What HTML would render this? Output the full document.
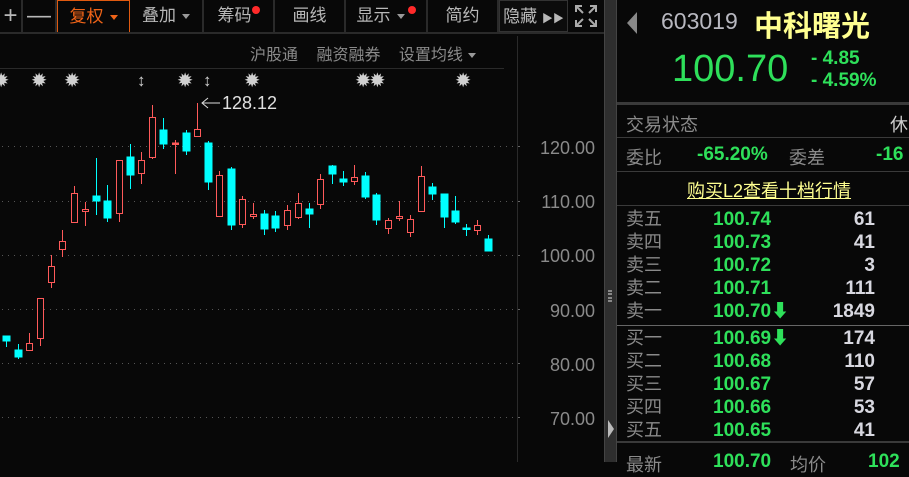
<!DOCTYPE html>
<html><head><meta charset="utf-8"><style>
*{margin:0;padding:0;box-sizing:border-box}
body{width:909px;height:462px;background:#080808;overflow:hidden;position:relative;font-family:"Liberation Sans","Noto Sans CJK SC",sans-serif}
.a{position:absolute;white-space:nowrap}
.tb{position:absolute;top:0;height:32px;border-right:2px solid #2a2a2a;color:#b8b8b8;font-size:17px;line-height:32px;text-align:center}
.dot{display:inline-block;width:8px;height:8px;border-radius:50%;background:#ff2a2a;vertical-align:top;margin-top:6px}
.tri{display:inline-block;border-left:4px solid transparent;border-right:4px solid transparent;border-top:5px solid #999;vertical-align:middle;margin-left:6px}
.lab{color:#8a8a8a;font-size:18px}
.g{color:#2ee05a;font-weight:bold;font-size:19px}
.w{color:#d8d8e0;font-weight:bold;font-size:19px}
.hl{position:absolute;left:617px;right:0;height:2px;background:#333}
</style></head><body>
<div class="tb" style="left:0;width:23px;font-size:24px">+</div>
<div class="tb" style="left:23px;width:34px;font-size:24px">—</div>
<div class="tb" style="left:57px;width:73px;border:1px solid #e05a10;color:#f06418;height:33px">复权<span class="tri" style="border-top-color:#f06418"></span></div>
<div class="tb" style="left:130px;width:74px">叠加<span class="tri"></span></div>
<div class="tb" style="left:204px;width:71px">筹码<span class="dot"></span></div>
<div class="tb" style="left:275px;width:71px">画线</div>
<div class="tb" style="left:346px;width:82px">显示<span class="tri"></span><span class="dot" style="margin-left:3px"></span></div>
<div class="tb" style="left:428px;width:71px">简约</div>
<div class="tb" style="left:499px;width:69px;border:1px solid #333;background:#0c0c0c">隐藏 <span style="font-size:11px">▶▶</span></div>
<div class="tb" style="left:568px;width:36px;border-right:none">
<svg width="22" height="22" viewBox="0 0 22 22" style="margin-top:5px" stroke="#aaa" stroke-width="2" fill="none"><path d="M1 7V1H7M15 1H21V7M21 15V21H15M7 21H1V15M2 2L8 8M20 2L14 8M20 20L14 14M2 20L8 14"/></svg></div>
<div class="a" style="left:0;top:32px;width:604px;height:2px;background:#2a2a2a"></div>
<div class="a" style="left:250px;top:41px;color:#8a8a8a;font-size:16px;word-spacing:14px">沪股通 融资融券 设置均线<span class="tri" style="margin-left:5px"></span></div>
<div class="a" style="left:0;top:68px;width:504px;height:1px;background:#2a2a2a"></div>
<div class="a" style="left:517px;top:36px;width:1px;height:426px;background:#2a2a2a"></div>
<div class="a" style="top:71px;left:0;color:#d0d0d0;font-size:17px;font-weight:bold">
<span class="a" style="left:-6px">✹</span><span class="a" style="left:32px">✹</span><span class="a" style="left:65px">✹</span><span class="a" style="left:137px">↕</span><span class="a" style="left:178px">✹</span><span class="a" style="left:203px">↕</span><span class="a" style="left:245px">✹</span><span class="a" style="left:356px">✹✹</span><span class="a" style="left:456px">✹</span></div>
<svg class="a" style="left:0;top:0" width="520" height="462">
<g stroke="#555" stroke-dasharray="1 5" stroke-width="1">
<line x1="2" y1="146.5" x2="515" y2="146.5"/><line x1="2" y1="201.5" x2="515" y2="201.5"/><line x1="2" y1="255.5" x2="515" y2="255.5"/><line x1="2" y1="309.5" x2="515" y2="309.5"/><line x1="2" y1="363.5" x2="515" y2="363.5"/><line x1="2" y1="417.5" x2="515" y2="417.5"/></g>
<g stroke="#666"><line x1="518" y1="146.5" x2="523" y2="146.5"/><line x1="518" y1="201.5" x2="523" y2="201.5"/><line x1="518" y1="255.5" x2="523" y2="255.5"/><line x1="518" y1="309.5" x2="523" y2="309.5"/><line x1="518" y1="363.5" x2="523" y2="363.5"/><line x1="518" y1="417.5" x2="523" y2="417.5"/></g>
<g stroke="#00ffff" fill="#00ffff">
<line x1="6.5" y1="336" x2="6.5" y2="347"/><rect x="3" y="336" width="7" height="5"/>
<line x1="18.5" y1="344" x2="18.5" y2="359"/><rect x="15" y="350" width="7" height="7"/>
<line x1="96.5" y1="158" x2="96.5" y2="215"/><rect x="93" y="196" width="7" height="5"/>
<line x1="107.5" y1="185" x2="107.5" y2="222"/><rect x="104" y="201" width="7" height="17"/>
<line x1="130.5" y1="144" x2="130.5" y2="189"/><rect x="127" y="157" width="7" height="18"/>
<line x1="163.5" y1="118" x2="163.5" y2="149"/><rect x="160" y="130" width="7" height="14"/>
<line x1="186.5" y1="130" x2="186.5" y2="155"/><rect x="183" y="133" width="7" height="18"/>
<line x1="208.5" y1="141" x2="208.5" y2="190"/><rect x="205" y="143" width="7" height="39"/>
<line x1="231.5" y1="167" x2="231.5" y2="230"/><rect x="228" y="169" width="7" height="56"/>
<line x1="264.5" y1="210" x2="264.5" y2="235"/><rect x="261" y="214" width="7" height="15"/>
<line x1="275.5" y1="211" x2="275.5" y2="232"/><rect x="272" y="216" width="7" height="12"/>
<line x1="309.5" y1="203" x2="309.5" y2="228"/><rect x="306" y="209" width="7" height="5"/>
<line x1="332.5" y1="165" x2="332.5" y2="184"/><rect x="329" y="166" width="7" height="8"/>
<line x1="343.5" y1="171" x2="343.5" y2="186"/><rect x="340" y="179" width="7" height="3"/>
<line x1="365.5" y1="172" x2="365.5" y2="199"/><rect x="362" y="176" width="7" height="21"/>
<line x1="376.5" y1="193" x2="376.5" y2="225"/><rect x="373" y="195" width="7" height="25"/>
<line x1="432.5" y1="183" x2="432.5" y2="200"/><rect x="429" y="187" width="7" height="7"/>
<line x1="444.5" y1="194" x2="444.5" y2="228"/><rect x="441" y="194" width="7" height="23"/>
<line x1="455.5" y1="196" x2="455.5" y2="224"/><rect x="452" y="211" width="7" height="11"/>
<line x1="466.5" y1="224" x2="466.5" y2="236"/><rect x="463" y="228" width="7" height="1.5"/>
<line x1="488.5" y1="235" x2="488.5" y2="251"/><rect x="485" y="239" width="7" height="12"/>
</g>
<g stroke="#ff5a5a" fill="#080808">
<line x1="29.5" y1="333" x2="29.5" y2="350"/><rect x="26.5" y="343.5" width="6" height="7"/>
<line x1="40.5" y1="298" x2="40.5" y2="346"/><rect x="37.5" y="298.5" width="6" height="40"/>
<line x1="51.5" y1="255" x2="51.5" y2="288"/><rect x="48.5" y="266.5" width="6" height="16"/>
<line x1="62.5" y1="230" x2="62.5" y2="257"/><rect x="59.5" y="241.5" width="6" height="8"/>
<line x1="74.5" y1="186" x2="74.5" y2="222"/><rect x="71.5" y="193.5" width="6" height="29"/>
<line x1="85.5" y1="202" x2="85.5" y2="226"/><rect x="82.5" y="209.5" width="6" height="2"/>
<line x1="119.5" y1="160" x2="119.5" y2="222"/><rect x="116.5" y="160.5" width="6" height="53"/>
<line x1="141.5" y1="152" x2="141.5" y2="184"/><rect x="138.5" y="160.5" width="6" height="13"/>
<line x1="152.5" y1="105" x2="152.5" y2="159"/><rect x="149.5" y="117.5" width="6" height="40"/>
<line x1="175.5" y1="140" x2="175.5" y2="174"/><rect x="172.5" y="143" width="6" height="1.5" fill="#ff5a5a"/>
<line x1="197.5" y1="103" x2="197.5" y2="136"/><rect x="194.5" y="129.5" width="6" height="7"/>
<line x1="219.5" y1="171" x2="219.5" y2="216"/><rect x="216.5" y="175.5" width="6" height="41"/>
<line x1="242.5" y1="196" x2="242.5" y2="228"/><rect x="239.5" y="199.5" width="6" height="25"/>
<line x1="253.5" y1="203" x2="253.5" y2="219"/><rect x="250.5" y="214.5" width="6" height="2"/>
<line x1="287.5" y1="205" x2="287.5" y2="230"/><rect x="284.5" y="210.5" width="6" height="15"/>
<line x1="298.5" y1="193" x2="298.5" y2="219"/><rect x="295.5" y="203.5" width="6" height="14"/>
<line x1="320.5" y1="174" x2="320.5" y2="209"/><rect x="317.5" y="179.5" width="6" height="25"/>
<line x1="354.5" y1="165" x2="354.5" y2="185"/><rect x="351.5" y="177.5" width="6" height="4"/>
<line x1="388.5" y1="218" x2="388.5" y2="234"/><rect x="385.5" y="220.5" width="6" height="8"/>
<line x1="399.5" y1="201" x2="399.5" y2="221"/><rect x="396.5" y="216.5" width="6" height="2"/>
<line x1="410.5" y1="215" x2="410.5" y2="237"/><rect x="407.5" y="219.5" width="6" height="13"/>
<line x1="421.5" y1="166" x2="421.5" y2="211"/><rect x="418.5" y="176.5" width="6" height="35"/>
<line x1="477.5" y1="220" x2="477.5" y2="235"/><rect x="474.5" y="225.5" width="6" height="5"/>
</g>
<line x1="202" y1="103" x2="220" y2="103" stroke="#ddd"/><path d="M208 98L202 103L208 108" stroke="#ddd" fill="none"/>
<text x="222" y="109" fill="#e0e0e0" font-size="18" font-family="Liberation Sans">128.12</text>
</svg>
<div class="a" style="right:314px;top:121px;color:#8a8a8a;font-size:18px;text-align:right;line-height:54.2px">120.00<br>110.00<br>100.00<br>90.00<br>80.00<br>70.00</div>
<div class="a" style="left:604px;top:0;width:12px;height:462px;background:#2e2e2e;border-left:1px solid #444"></div>
<div class="a" style="left:608px;top:290px;width:4px;height:12px;border-left:2px dotted #888;border-right:2px dotted #888"></div>
<div class="a" style="left:608px;top:420px;border-top:9px solid transparent;border-bottom:9px solid transparent;border-left:6px solid #bbb"></div>
<div class="a" style="left:616px;top:0;width:1px;height:462px;background:#444"></div>
<div class="a" style="left:627px;top:12px;border-top:11px solid transparent;border-bottom:11px solid transparent;border-right:10px solid #888"></div>
<div class="a" style="left:661px;top:8px;color:#b8b8c0;font-size:23px">603019</div>
<div class="a" style="left:754px;top:3px;color:#ffff90;font-size:29px;font-weight:bold">中科曙光</div>
<div class="a" style="left:672px;top:48px;color:#2ee05a;font-size:38px">100.70</div>
<div class="a" style="left:811px;top:48px;color:#2ee05a;font-size:19px;font-weight:bold;line-height:22px">-&nbsp;4.85<br>-&nbsp;4.59%</div>
<div class="hl" style="top:102px;height:3px;background:#3a3a3a"></div>
<div class="a lab" style="left:626px;top:111px">交易状态</div>
<div class="a lab" style="left:890px;top:111px;color:#ccc">休</div>
<div class="hl" style="top:137px;height:1px;background:#3a3a3a"></div>
<div class="a lab" style="left:626px;top:144px">委比</div>
<div class="a g" style="left:697px;top:144px">-65.20%</div>
<div class="a lab" style="left:789px;top:144px">委差</div>
<div class="a g" style="left:876px;top:144px">-16</div>
<div class="hl" style="top:171px;height:1px;background:#3a3a3a"></div>
<div class="a" style="left:687px;top:177px;color:#ffff90;font-size:18px;text-decoration:underline">购买L2查看十档行情</div>
<div class="hl" style="top:205px;height:1px;background:#3a3a3a"></div>
<div class="a lab" style="left:626px;top:208px;line-height:23px">卖五<br>卖四<br>卖三<br>卖二<br>卖一</div>
<div class="a g" style="left:713px;top:208px;line-height:23px">100.74<br>100.73<br>100.72<br>100.71<br>100.70<span style="font-size:18px">⬇</span></div>
<div class="a w" style="right:34px;top:208px;line-height:23px;text-align:right">61<br>41<br>3<br>111<br>1849</div>
<div class="hl" style="top:325px;height:1px;background:#666"></div>
<div class="a lab" style="left:626px;top:327px;line-height:23px">买一<br>买二<br>买三<br>买四<br>买五</div>
<div class="a g" style="left:713px;top:327px;line-height:23px">100.69<span style="font-size:18px">⬇</span><br>100.68<br>100.67<br>100.66<br>100.65</div>
<div class="a w" style="right:34px;top:327px;line-height:23px;text-align:right">174<br>110<br>57<br>53<br>41</div>
<div class="hl" style="top:441px;height:2px;background:#3a3a3a"></div>
<div class="a lab" style="left:626px;top:451px">最新</div>
<div class="a g" style="left:713px;top:451px">100.70</div>
<div class="a lab" style="left:790px;top:451px">均价</div>
<div class="a g" style="left:868px;top:451px">102</div>
</body></html>
